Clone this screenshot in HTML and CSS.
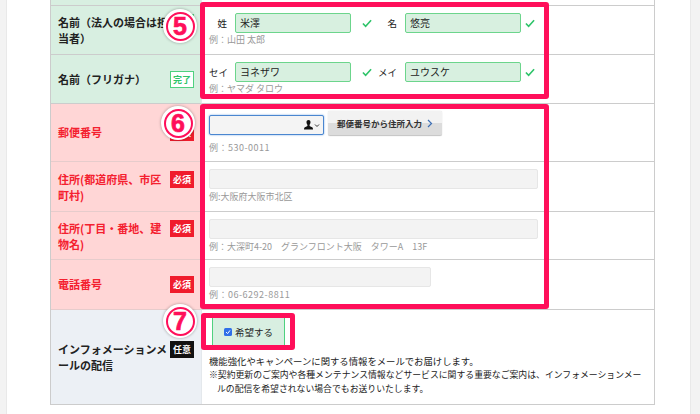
FILE: index.html
```html
<!DOCTYPE html>
<html lang="ja">
<head>
<meta charset="utf-8">
<title>お申し込みフォーム</title>
<link rel="stylesheet" href="styles.css">
</head>
<body>
<div class="page">
  <div class="strip strip-left"></div>
  <main class="main">
    <div class="form-table">
      <div class="th th-green"></div><div class="td td-first"></div>

      <div class="th th-green"><div class="th-in"><span class="label">名前（法人の場合は担当者）</span><span class="badge badge-done">完了</span></div></div>
      <div class="td">
        <div class="field-row">
          <span class="name-label nl-a">姓</span><span class="input input-ok in-name">米澤</span><svg class="check" viewBox="0 0 11 9"><path d="M1 4.5 4 7.5 10 1" /></svg>
          <span class="name-label nl-b">名</span><span class="input input-ok in-name">悠亮</span><svg class="check check-b" viewBox="0 0 11 9"><path d="M1 4.5 4 7.5 10 1" /></svg>
        </div>
        <p class="hint">例：山田 太郎</p>
      </div>

      <div class="th th-green"><div class="th-in"><span class="label">名前（フリガナ）</span><span class="badge badge-done">完了</span></div></div>
      <div class="td">
        <div class="field-row">
          <span class="name-label nl-a">セイ</span><span class="input input-ok in-name">ヨネザワ</span><svg class="check" viewBox="0 0 11 9"><path d="M1 4.5 4 7.5 10 1" /></svg>
          <span class="name-label nl-b">メイ</span><span class="input input-ok in-name">ユウスケ</span><svg class="check check-b" viewBox="0 0 11 9"><path d="M1 4.5 4 7.5 10 1" /></svg>
        </div>
        <p class="hint">例：ヤマダ タロウ</p>
      </div>

      <div class="th th-red"><div class="th-in"><span class="label">郵便番号</span><span class="badge badge-req">必須</span></div></div>
      <div class="td td-zip">
        <div class="zip-row">
          <span class="input input-focus">
            <svg class="person" viewBox="0 0 16 10"><path class="p-fill" d="M4.5 0C3 0 2.4 1.200 2.500 2.500 2.600 3.700 3.200 4.600 3.500 5 3.500 6 3 6.500 1.500 7 .5 7.400 0 8 0 9.500H9C9 8 8.500 7.400 7.500 7 6 6.500 5.500 6 5.500 5 5.800 4.600 6.400 3.700 6.500 2.500 6.600 1.200 6 0 4.500 0Z"/><path class="p-line" d="M11 4.500 13 6.500 15 4.500"/></svg>
          </span>
          <span class="zip-btn">郵便番号から住所入力<svg class="chev" viewBox="0 0 6 9"><path d="M1 1 4.500 4.500 1 8"/></svg></span>
        </div>
        <p class="hint hint-zip">例：530-0011</p>
      </div>

      <div class="th th-red"><div class="th-in"><span class="label">住所(都道府県、市区町村)</span><span class="badge badge-req">必須</span></div></div>
      <div class="td td-addr">
        <span class="input input-empty in-wide"></span>
        <p class="hint">例:大阪府大阪市北区</p>
      </div>

      <div class="th th-red"><div class="th-in"><span class="label">住所(丁目・番地、建物名)</span><span class="badge badge-req">必須</span></div></div>
      <div class="td td-addr">
        <span class="input input-empty in-wide"></span>
        <p class="hint">例：大深町4-20　グランフロント大阪　タワーA　13F</p>
      </div>

      <div class="th th-red"><div class="th-in"><span class="label">電話番号</span><span class="badge badge-req">必須</span></div></div>
      <div class="td td-addr">
        <span class="input input-empty in-tel"></span>
        <p class="hint hint-tel">例：06-6292-8811</p>
      </div>

      <div class="th th-blue"><div class="th-in"><span class="label label-dark">インフォメーションメールの配信</span><span class="badge badge-opt">任意</span></div></div>
      <div class="td td-info">
        <label class="opt-in"><span class="cb"><svg viewBox="0 0 10 10"><path d="M2.500 5 4.500 7 7.500 3"/></svg></span>希望する</label>
        <p class="info info-first">機能強化やキャンペーンに関する情報をメールでお届けします。</p>
        <p class="info info-note">※契約更新のご案内や各種メンテナンス情報などサービスに関する重要なご案内は、インフォメーションメールの配信を希望されない場合でもお送りいたします。</p>
      </div>
    </div>
  </main>
  <div class="strip strip-right"></div>

  <div class="hl hl-5"></div>
  <div class="hl hl-6"></div>
  <div class="hl hl-7"></div>
  <div class="num num-5"><span>5</span></div>
  <div class="num num-6"><span>6</span></div>
  <div class="num num-7"><span>7</span></div>
</div>
</body>
</html>
```
FILE: styles.css
```css
* { box-sizing: border-box; }
html, body { margin: 0; padding: 0; background: #fff; }
body { font-family: "Noto Sans CJK JP", "Liberation Sans", sans-serif; color: #222; }
p { margin: 0; }

.page { position: relative; width: 700px; height: 414px; overflow: hidden; display: flex; }
.strip { width: 10px; background: #f3f3f3; flex: none; }
.strip-left { width: 7px; border-right: 1px solid #e9e9e9; }
.strip-right { margin-left: auto; border-left: 1px solid #e9e9e9; }
.main { flex: none; padding-left: 43px; }

.form-table {
  width: 605px;
  display: grid;
  grid-template-columns: 150px 453px;
  grid-template-rows: 6px 49px 49px 58px 50px 48px 50px 94px;
  border-left: 1px solid #ccc;
  border-right: 1px solid #ccc;
  border-bottom: 1px solid #ccc;
  height: 405px;
}
.th { border-bottom: 1px solid #ccc; display: flex; align-items: center; padding: 0 7px; }
.td { border-bottom: 1px solid #ccc; padding: 7px 7px 0; min-width: 0; border-left: 1px solid #e4e8ec; }
.td-first { padding: 0; }
.th-green { background: #d8efe1; }
.th-red { background: #ffd6d6; border-bottom-color: #e6cccc; }
.th-blue { background: #ecf0f5; border-bottom: 0; }
.td-info { border-bottom: 0; }

.th-in { display: flex; align-items: flex-start; justify-content: space-between; width: 100%; }
.label { width: 110px; font-size: 11px; line-height: 16px; font-weight: 700; color: #222; }
.th-red .label { color: #f4202f; }
.badge { flex: none; width: 24px; height: 17px; font-size: 9px; line-height: 15px; font-weight: 700; text-align: center; }
.badge-done { background: #fff; color: #2fc46a; border: 1px solid #4fd17f; }
.badge-req { background: #f01c2c; color: #fff; line-height: 17px; }
.badge-opt { background: #111; color: #fff; line-height: 17px; }

.field-row { display: flex; align-items: center; height: 20px; }
.name-label { font-size: 9.500px; padding-right: 8px; text-align: right; flex: none; line-height: 20px; color: #222; white-space: nowrap; }
.nl-a { width: 26px; }
.nl-b { width: 33px; }
.input { display: block; height: 20px; border-radius: 2px; flex: none; font-size: 10px; line-height: 18px; padding-left: 4px; }
.input-ok { background: #d8f0e0; border: 1px solid #6cd58c; color: #222; }
.in-name { width: 116px; }
.check { width: 10px; height: 9px; margin-left: 11px; flex: none; fill: none; stroke: #2fc46a; stroke-width: 1.800; }
.check-b { margin-left: 4px; }

.hint { font-size: 9px; line-height: 12px; color: #999; margin-top: 1px; white-space: nowrap; }
.hint-tel { letter-spacing: .5px; }

.zip-row { display: flex; align-items: flex-start; gap: 4px; }
.input-focus { margin-top: 4px; width: 115px; background: #f4f4f4; border: 1px solid #4a86d0; box-shadow: 0 0 2px #6ea4e0; position: relative; }
.person { position: absolute; right: 3px; top: 4px; width: 16px; height: 10px; }
.p-fill { fill: #111; }
.p-line { fill: none; stroke: #333; stroke-width: 1; }
.zip-btn { width: 114px; height: 25px; border-radius: 2px; background: linear-gradient(#f2f2f2 0, #f2f2f2 48%, #dcdcdc 48%, #dcdcdc 100%); border-bottom: 1px solid #c8c8c8; font-size: 8.500px; font-weight: 700; line-height: 24px; color: #333; display: flex; align-items: center; justify-content: center; gap: 5px; box-shadow: 0 0 1px #bbb; white-space: nowrap; }
.chev { width: 6px; height: 9px; fill: none; stroke: #3d6fb5; stroke-width: 1.200; }
.hint-zip { margin-top: 6px; letter-spacing: .5px; }

.td-addr .hint { margin-top: 2px; }
.input-empty { background: #f3f3f3; border: 1px solid #e6e6e6; }
.in-wide { width: 329px; }
.in-tel { width: 222px; }

.td-info { padding-top: 8px; }
.opt-in { display: flex; align-items: center; justify-content: center; gap: 3px; width: 73px; height: 28px; margin-left: 3px; background: #d8efe1; border-left: 1px solid #4fd17f; border-right: 1px solid #4fd17f; font-size: 9.500px; color: #222; }
.cb { width: 8px; height: 8px; border-radius: 1.500px; background: #2f6fe8; display: block; }
.cb svg { display: block; width: 8px; height: 8px; fill: none; stroke: #fff; stroke-width: 1.200; }
.info { font-size: 8.850px; line-height: 14px; color: #222; padding-left: 8px; text-indent: -8px; width: 441px; }
.info-first { font-size: 9.350px; margin-top: 8px; padding-left: 0; text-indent: 0; white-space: nowrap; }

.hl { position: absolute; border: 5px solid #ff0f5a; border-radius: 3px; }
.hl-5 { left: 200px; top: 2px; width: 349px; height: 97px; }
.hl-6 { left: 200px; top: 104px; width: 349px; height: 205px; }
.hl-7 { left: 201px; top: 313px; width: 94px; height: 37px; }

.num { position: absolute; width: 34px; height: 34px; border-radius: 50%; background: #fff; box-shadow: 0 0 3px rgba(0,0,0,.35); display: flex; align-items: center; justify-content: center; }
.num span { display: block; width: 29px; height: 29px; border-radius: 50%; border: 2px solid #ff0f5a; color: #ff0f5a; font-size: 25px; line-height: 25px; font-weight: 700; text-align: center; font-family: "Liberation Sans", sans-serif; -webkit-text-stroke: .7px #ff0f5a; }
.num-5 { left: 163px; top: 9px; }
.num-6 { left: 161px; top: 106px; }
.num-7 { left: 163px; top: 304px; }
```
